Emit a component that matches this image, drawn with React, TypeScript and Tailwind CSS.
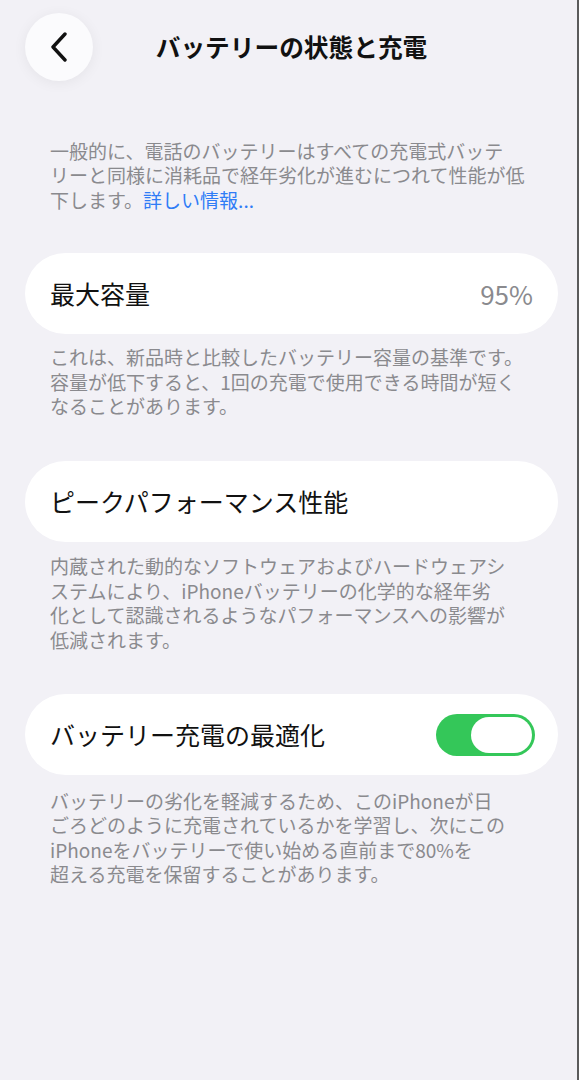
import React, { useState } from 'react';

const font = { fontFamily: '"Noto Sans CJK JP", "Noto Sans", sans-serif' };

function Card({ children }: { children: React.ReactNode }) {
  return (
    <div className="ml-[25px] w-[533px] h-[81px] rounded-full bg-white flex items-center justify-between pl-[25px] pr-[25px]">
      {children}
    </div>
  );
}

function Note({ children, className = '' }: { children: React.ReactNode; className?: string }) {
  return (
    <p className={`ml-[50px] w-[500px] text-[19px] leading-[24.4px] text-[#8a8a8e] whitespace-nowrap ${className}`}>
      {children}
    </p>
  );
}

export default function App() {
  const [on, setOn] = useState(true);

  return (
    <div style={font} className="relative w-[579px] min-h-[1080px] bg-[#f2f1f6] border-r-2 border-[#5b5b5b]">
      {/* header */}
      <div className="relative h-[94px] flex items-center">
        <button className="ml-[25px] w-[68px] h-[68px] rounded-full bg-[#fbfbfd] shadow-[0_2px_14px_rgba(0,0,0,0.06)] flex items-center justify-center">
          <svg width="20" height="30" viewBox="0 0 20 30" fill="none">
            <path d="M16 2 L4 15 L16 28" stroke="#111" strokeWidth="3.4" strokeLinecap="round" strokeLinejoin="round" />
          </svg>
        </button>
        <h1 className="absolute left-0 right-0 text-center pl-[6px] text-[24.7px] font-bold text-[#111] pointer-events-none">
          バッテリーの状態と充電
        </h1>
      </div>

      <Note className="mt-[45px]">
        一般的に、電話のバッテリーはすべての充電式バッテ<br />
        リーと同様に消耗品で経年劣化が進むにつれて性能が低<br />
        下します。<span className="text-[#2f7cf6]">詳しい情報...</span>
      </Note>

      <div className="mt-[41px]">
        <Card>
          <span className="text-[25px] text-[#111]">最大容量</span>
          <span className="text-[26px] text-[#8a8a8e]">95%</span>
        </Card>
      </div>

      <Note className="mt-[11px]">
        これは、新品時と比較したバッテリー容量の基準です。<br />
        容量が低下すると、1回の充電で使用できる時間が短く<br />
        なることがあります。
      </Note>

      <div className="mt-[43px]">
        <Card>
          <span className="text-[25px] text-[#111]">ピークパフォーマンス性能</span>
        </Card>
      </div>

      <Note className="mt-[12px]">
        内蔵された動的なソフトウェアおよびハードウェアシ<br />
        ステムにより、iPhoneバッテリーの化学的な経年劣<br />
        化として認識されるようなパフォーマンスへの影響が<br />
        低減されます。
      </Note>

      <div className="mt-[42px]">
        <Card>
          <span className="text-[25px] text-[#111]">バッテリー充電の最適化</span>
          <button
            onClick={() => setOn(!on)}
            className={`-mr-[2px] w-[99px] h-[42px] rounded-full p-[3px] flex ${on ? 'bg-[#34c759] justify-end' : 'bg-[#e5e5ea] justify-start'}`}
          >
            <span className="block w-[61px] h-[36px] rounded-full bg-white" />
          </button>
        </Card>
      </div>

      <Note className="mt-[14px]">
        バッテリーの劣化を軽減するため、このiPhoneが日<br />
        ごろどのように充電されているかを学習し、次にこの<br />
        iPhoneをバッテリーで使い始める直前まで80%を<br />
        超える充電を保留することがあります。
      </Note>
    </div>
  );
}
